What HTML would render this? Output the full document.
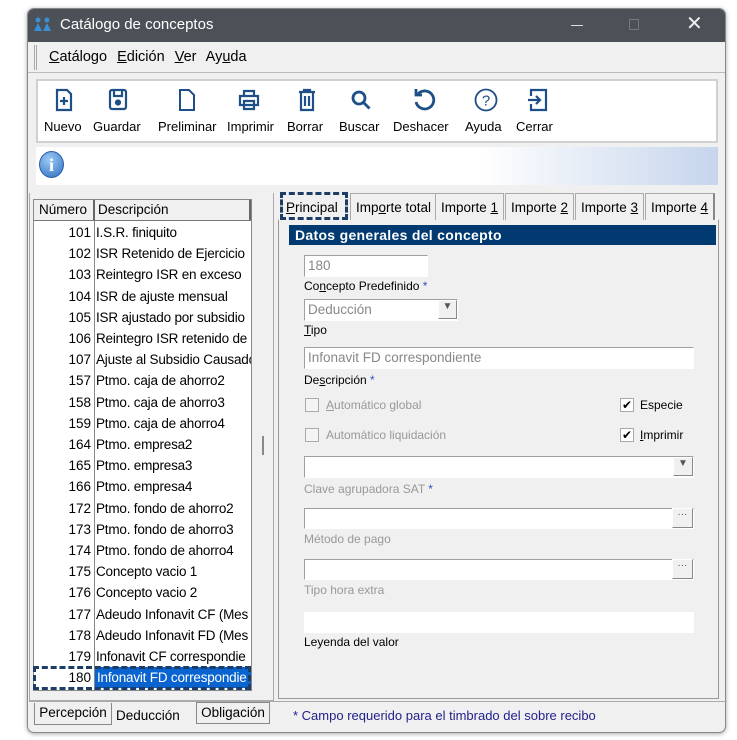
<!DOCTYPE html>
<html><head><meta charset="utf-8"><style>
*{margin:0;padding:0;box-sizing:border-box}
body{width:737px;height:740px;background:#fff;font-family:"Liberation Sans",sans-serif;font-size:13.5px;color:#000;position:relative;overflow:hidden}
.a{position:absolute}
.win{left:27px;top:8px;width:699px;height:725px;background:#f0f0f0;border:1px solid #888;border-radius:7px;overflow:hidden;box-shadow:0 1px 5px rgba(0,0,0,.35)}
.tb{left:0;top:0;width:100%;height:33px;background:#4b5157;color:#fff;font-size:15px}
.row{position:absolute;left:0;width:217px;height:21px;line-height:21px;white-space:nowrap;overflow:hidden}
.row .n{position:absolute;left:0;width:57px;text-align:right}
.row .d{position:absolute;left:62px;letter-spacing:-.2px}
.inp{position:absolute;background:#fff;border-top:1px solid #a0a0a0;border-left:1px solid #a0a0a0;border-bottom:1px solid #fff;border-right:1px solid #fff}
.lbl{position:absolute;font-size:12px}
.g{color:#999}
.btn{position:absolute;background:#f0f0f0;border:1px solid #888;border-top-color:#fff;border-left-color:#fff;font-size:10px;text-align:center;color:#555}
.tab{position:absolute;top:193px;height:27px;line-height:27px;border:1px solid #aaa;border-bottom:none;background:#f0f0f0;padding:0 5px;font-size:13.5px}
.ic{position:absolute;top:88px;width:24px;height:24px}
.tl{position:absolute;top:119px;font-size:13px}
.cb{position:absolute;width:14px;height:14px;border:1px solid #aaa;background:#f4f4f4}
</style></head><body>
<div class="a win">
 <div class="a tb">
  <svg class="a" style="left:5px;top:8px" width="20" height="16" viewBox="0 0 20 16"><g fill="#3a8fd8"><circle cx="5" cy="3" r="2.5"/><circle cx="14" cy="3" r="2.5"/><path d="M1 14 L5 6 L9 14 Z M10 14 L14 6 L18 14Z"/></g></svg>
  <div class="a" style="left:32px;top:7px">Catálogo de conceptos</div>
  <div class="a" style="left:543px;top:16px;width:12px;height:1px;background:#ddd"></div>
  <div class="a" style="left:601px;top:10px;width:10px;height:11px;border:1px solid #777"></div>
  <div class="a" style="left:658px;top:2px;font-size:20px;color:#eee">✕</div>
 </div>
 <div class="a" style="left:6px;top:36px;width:3px;height:25px;border-left:1px solid #aaa;border-right:1px solid #aaa"></div>
 <div class="a" style="left:21px;top:40px;font-size:14.5px;word-spacing:6px"><u>C</u>atálogo <u>E</u>dición <u>V</u>er Ay<u>u</u>da</div>
 <div class="a" style="left:0;top:63px;width:100%;height:1px;background:#bbb"></div>
 <div class="a" style="left:8px;top:70px;width:682px;height:64px;background:#fff;border:2px solid #d0d0d0"></div>
 <div class="a" style="left:8px;top:138px;width:682px;height:38px;background:linear-gradient(90deg,#fff 0%,#fff 65%,#c6d5ec 100%)"></div>
 <div class="a" style="left:11px;top:142px;width:25px;height:27px;border-radius:50%;background:radial-gradient(circle at 40% 30%,#9ccaf5,#2f6fc0);border:1px solid #2a5ea8;color:#fff;font-weight:bold;text-align:center;line-height:26px;font-family:'Liberation Serif';font-size:18px">i</div>
</div>
<svg class="ic" style="left:52px" viewBox="0 0 24 24" fill="none" stroke="#1e4f86" stroke-width="2.2"><path d="M5 2h10l4 4v16H5z"/><path d="M12 9v8M8 13h8"/></svg>
<svg class="ic" style="left:106px" viewBox="0 0 24 24" fill="none" stroke="#1e4f86" stroke-width="2.2"><rect x="4" y="2" width="16" height="19" rx="2"/><path d="M8 3v5h8V3"/><circle cx="12" cy="14.5" r="2" fill="#1e4f86"/></svg>
<svg class="ic" style="left:175px" viewBox="0 0 24 24" fill="none" stroke="#1e4f86" stroke-width="2"><path d="M5 2h9l5 5v15H5z"/></svg>
<svg class="ic" style="left:237px" viewBox="0 0 24 24" fill="none" stroke="#1e4f86" stroke-width="2.2"><path d="M7 8V3h10v5M3 8h18v9H3zM7 13h10v8H7z"/></svg>
<svg class="ic" style="left:295px" viewBox="0 0 24 24" fill="none" stroke="#1e4f86" stroke-width="2.2"><path d="M4 4h16M9 4V2h6v2M6 4v18h12V4M10 8v10M14 8v10"/></svg>
<svg class="ic" style="left:349px" viewBox="0 0 24 24" fill="none" stroke="#1e4f86" stroke-width="2.8"><circle cx="10" cy="10" r="6"/><path d="M14.5 14.5l6 6"/></svg>
<svg class="ic" style="left:412px" viewBox="0 0 24 24" fill="none" stroke="#1e4f86" stroke-width="2.8"><path d="M6 6a9 9 0 1 1-2 8"/><path d="M4 1v6h6"/></svg>
<svg class="ic" style="left:474px" viewBox="0 0 24 24" fill="none" stroke="#1e4f86" stroke-width="1.8"><circle cx="12" cy="12" r="10.5"/><text x="12" y="17.5" font-size="15" text-anchor="middle" fill="#1e4f86" stroke="none" font-family="Liberation Sans">?</text></svg>
<svg class="ic" style="left:526px" viewBox="0 0 24 24" fill="none" stroke="#1e4f86" stroke-width="2.2"><path d="M5 8V2h15v20H5v-6"/><path d="M2 12h12M10 8l4 4-4 4"/></svg>
<div class="tl" style="left:44px">Nuevo</div>
<div class="tl" style="left:93px">Guardar</div>
<div class="tl" style="left:158px">Preliminar</div>
<div class="tl" style="left:227px">Imprimir</div>
<div class="tl" style="left:287px">Borrar</div>
<div class="tl" style="left:339px">Buscar</div>
<div class="tl" style="left:393px">Deshacer</div>
<div class="tl" style="left:465px">Ayuda</div>
<div class="tl" style="left:516px">Cerrar</div>
<div class="a" style="left:29px;top:193px;width:245px;height:508px;border:1px solid #aaa;border-top:none"></div>
<div class="a" style="left:33px;top:199px;width:219px;height:492px;background:#fff;border:1px solid #888"></div>
<div class="a" style="left:34px;top:200px;width:217px;height:21px;background:#f0f0f0;border-bottom:1px solid #777;line-height:20px">
 <span class="a" style="left:5px">Número</span><span class="a" style="left:59px;top:0;height:20px;border-left:2px solid #666"></span><span class="a" style="left:64px">Descripción</span><span class="a" style="left:215px;top:0;height:20px;border-left:2px solid #666"></span>
</div>
<div class="a" style="left:94px;top:221px;width:1px;height:469px;background:#888"></div>
<div class="a" style="left:262px;top:436px;width:2px;height:19px;background:#888"></div>
<div class="a" style="left:34px;top:222px;width:217px;height:468px">
<div class="row" style="top:0"><span class="n">101</span><span class="d">I.S.R. finiquito</span></div>
<div class="row" style="top:21.2px"><span class="n">102</span><span class="d">ISR Retenido de Ejercicio</span></div>
<div class="row" style="top:42.4px"><span class="n">103</span><span class="d">Reintegro ISR en exceso</span></div>
<div class="row" style="top:63.6px"><span class="n">104</span><span class="d">ISR de ajuste mensual</span></div>
<div class="row" style="top:84.8px"><span class="n">105</span><span class="d">ISR ajustado por subsidio</span></div>
<div class="row" style="top:106px"><span class="n">106</span><span class="d">Reintegro ISR retenido de</span></div>
<div class="row" style="top:127.2px"><span class="n">107</span><span class="d">Ajuste al Subsidio Causado</span></div>
<div class="row" style="top:148.4px"><span class="n">157</span><span class="d">Ptmo. caja de ahorro2</span></div>
<div class="row" style="top:169.6px"><span class="n">158</span><span class="d">Ptmo. caja de ahorro3</span></div>
<div class="row" style="top:190.8px"><span class="n">159</span><span class="d">Ptmo. caja de ahorro4</span></div>
<div class="row" style="top:212px"><span class="n">164</span><span class="d">Ptmo. empresa2</span></div>
<div class="row" style="top:233.2px"><span class="n">165</span><span class="d">Ptmo. empresa3</span></div>
<div class="row" style="top:254.4px"><span class="n">166</span><span class="d">Ptmo. empresa4</span></div>
<div class="row" style="top:275.6px"><span class="n">172</span><span class="d">Ptmo. fondo de ahorro2</span></div>
<div class="row" style="top:296.8px"><span class="n">173</span><span class="d">Ptmo. fondo de ahorro3</span></div>
<div class="row" style="top:318px"><span class="n">174</span><span class="d">Ptmo. fondo de ahorro4</span></div>
<div class="row" style="top:339.2px"><span class="n">175</span><span class="d">Concepto vacio 1</span></div>
<div class="row" style="top:360.4px"><span class="n">176</span><span class="d">Concepto vacio 2</span></div>
<div class="row" style="top:381.6px"><span class="n">177</span><span class="d">Adeudo Infonavit CF (Mes</span></div>
<div class="row" style="top:402.8px"><span class="n">178</span><span class="d">Adeudo Infonavit FD (Mes</span></div>
<div class="row" style="top:424px"><span class="n">179</span><span class="d">Infonavit CF correspondie</span></div>
<div class="row" style="top:445.2px"><span class="n">180</span><span class="d" style="left:61px;background:#0a64d0;color:#fff;width:160px;padding-left:2px">Infonavit FD correspondie</span></div>
</div>
<div class="a" style="left:33px;top:666px;width:218px;height:24px;border:3px dashed #1e3d66"></div>
<div class="a" style="left:29px;top:701px;width:698px;height:1px;background:#aaa"></div>
<div class="a" style="left:34px;top:703px;width:78px;height:22px;border:1px solid #888;border-top:none;text-align:center;line-height:20px">Percepción</div>
<div class="a" style="left:116px;top:704px;font-size:13.5px;line-height:24px">Deducción</div>
<div class="a" style="left:196px;top:702px;width:74px;height:22px;border:1px solid #888;text-align:center;line-height:20px">Obligación</div>
<div class="a" style="left:293px;top:708px;color:#22228c;font-size:13px">* Campo requerido para el timbrado del sobre recibo</div>
<div class="a" style="left:278px;top:219px;width:441px;height:480px;border:1px solid #999;border-top-color:#fff"></div>
<div class="tab" style="left:282px;top:194px;border:none;padding:0 4px;font-size:13.5px"><u>P</u>rincipal</div>
<div class="a" style="left:280px;top:192px;width:68px;height:28px;border:3px dashed #1e3d66"></div>
<div class="tab" style="left:350px">Imp<u>o</u>rte total</div>
<div class="tab" style="left:435px">Importe <u>1</u></div>
<div class="tab" style="left:505px">Importe <u>2</u></div>
<div class="tab" style="left:575px">Importe <u>3</u></div>
<div class="tab" style="left:645px;border-right:2px solid #888">Importe <u>4</u></div>
<div class="a" style="left:289px;top:225px;width:427px;height:20px;background:#003a70;color:#fff;font-weight:bold;font-size:14px;line-height:20px;padding-left:6px;letter-spacing:.3px">Datos generales del concepto</div>
<div class="inp" style="left:304px;top:255px;width:124px;height:22px;color:#888;padding:2px 3px">180</div>
<div class="lbl" style="left:304px;top:279px">Co<u>n</u>cepto Predefinido <span style="color:#3050c0">*</span></div>
<div class="inp" style="left:304px;top:299px;width:154px;height:22px;color:#888;padding:2px 3px">Deducción</div>
<div class="btn" style="left:438px;top:300px;width:19px;height:19px">▼</div>
<div class="lbl" style="left:304px;top:323px"><u>T</u>ipo</div>
<div class="inp" style="left:304px;top:347px;width:390px;height:22px;color:#888;padding:2px 3px">Infonavit FD correspondiente</div>
<div class="lbl" style="left:304px;top:373px">De<u>s</u>cripción <span style="color:#3050c0">*</span></div>
<div class="cb" style="left:305px;top:398px"></div>
<div class="lbl g" style="left:326px;top:398px"><u>A</u>utomático global</div>
<div class="cb" style="left:305px;top:428px"></div>
<div class="lbl g" style="left:326px;top:428px">Automático liquidación</div>
<div class="cb" style="left:620px;top:398px;background:#fff;font-size:12px;line-height:12px;text-align:center">✔</div>
<div class="lbl" style="left:640px;top:398px">Especie</div>
<div class="cb" style="left:620px;top:428px;background:#fff;font-size:12px;line-height:12px;text-align:center">✔</div>
<div class="lbl" style="left:640px;top:428px"><u>I</u>mprimir</div>
<div class="inp" style="left:304px;top:456px;width:390px;height:22px"></div>
<div class="btn" style="left:673px;top:457px;width:20px;height:19px">▼</div>
<div class="lbl g" style="left:304px;top:482px">Clave agrupadora SAT <span style="color:#3050c0">*</span></div>
<div class="inp" style="left:304px;top:508px;width:390px;height:21px"></div>
<div class="btn" style="left:672px;top:508px;width:21px;height:20px">···</div>
<div class="lbl g" style="left:304px;top:532px">Método de pago</div>
<div class="inp" style="left:304px;top:559px;width:390px;height:21px"></div>
<div class="btn" style="left:672px;top:559px;width:21px;height:20px">···</div>
<div class="lbl g" style="left:304px;top:583px">Tipo hora extra</div>
<div class="a" style="left:304px;top:612px;width:390px;height:21px;background:#fff"></div>
<div class="lbl" style="left:304px;top:635px">Leyenda del valor</div>
</body></html>
